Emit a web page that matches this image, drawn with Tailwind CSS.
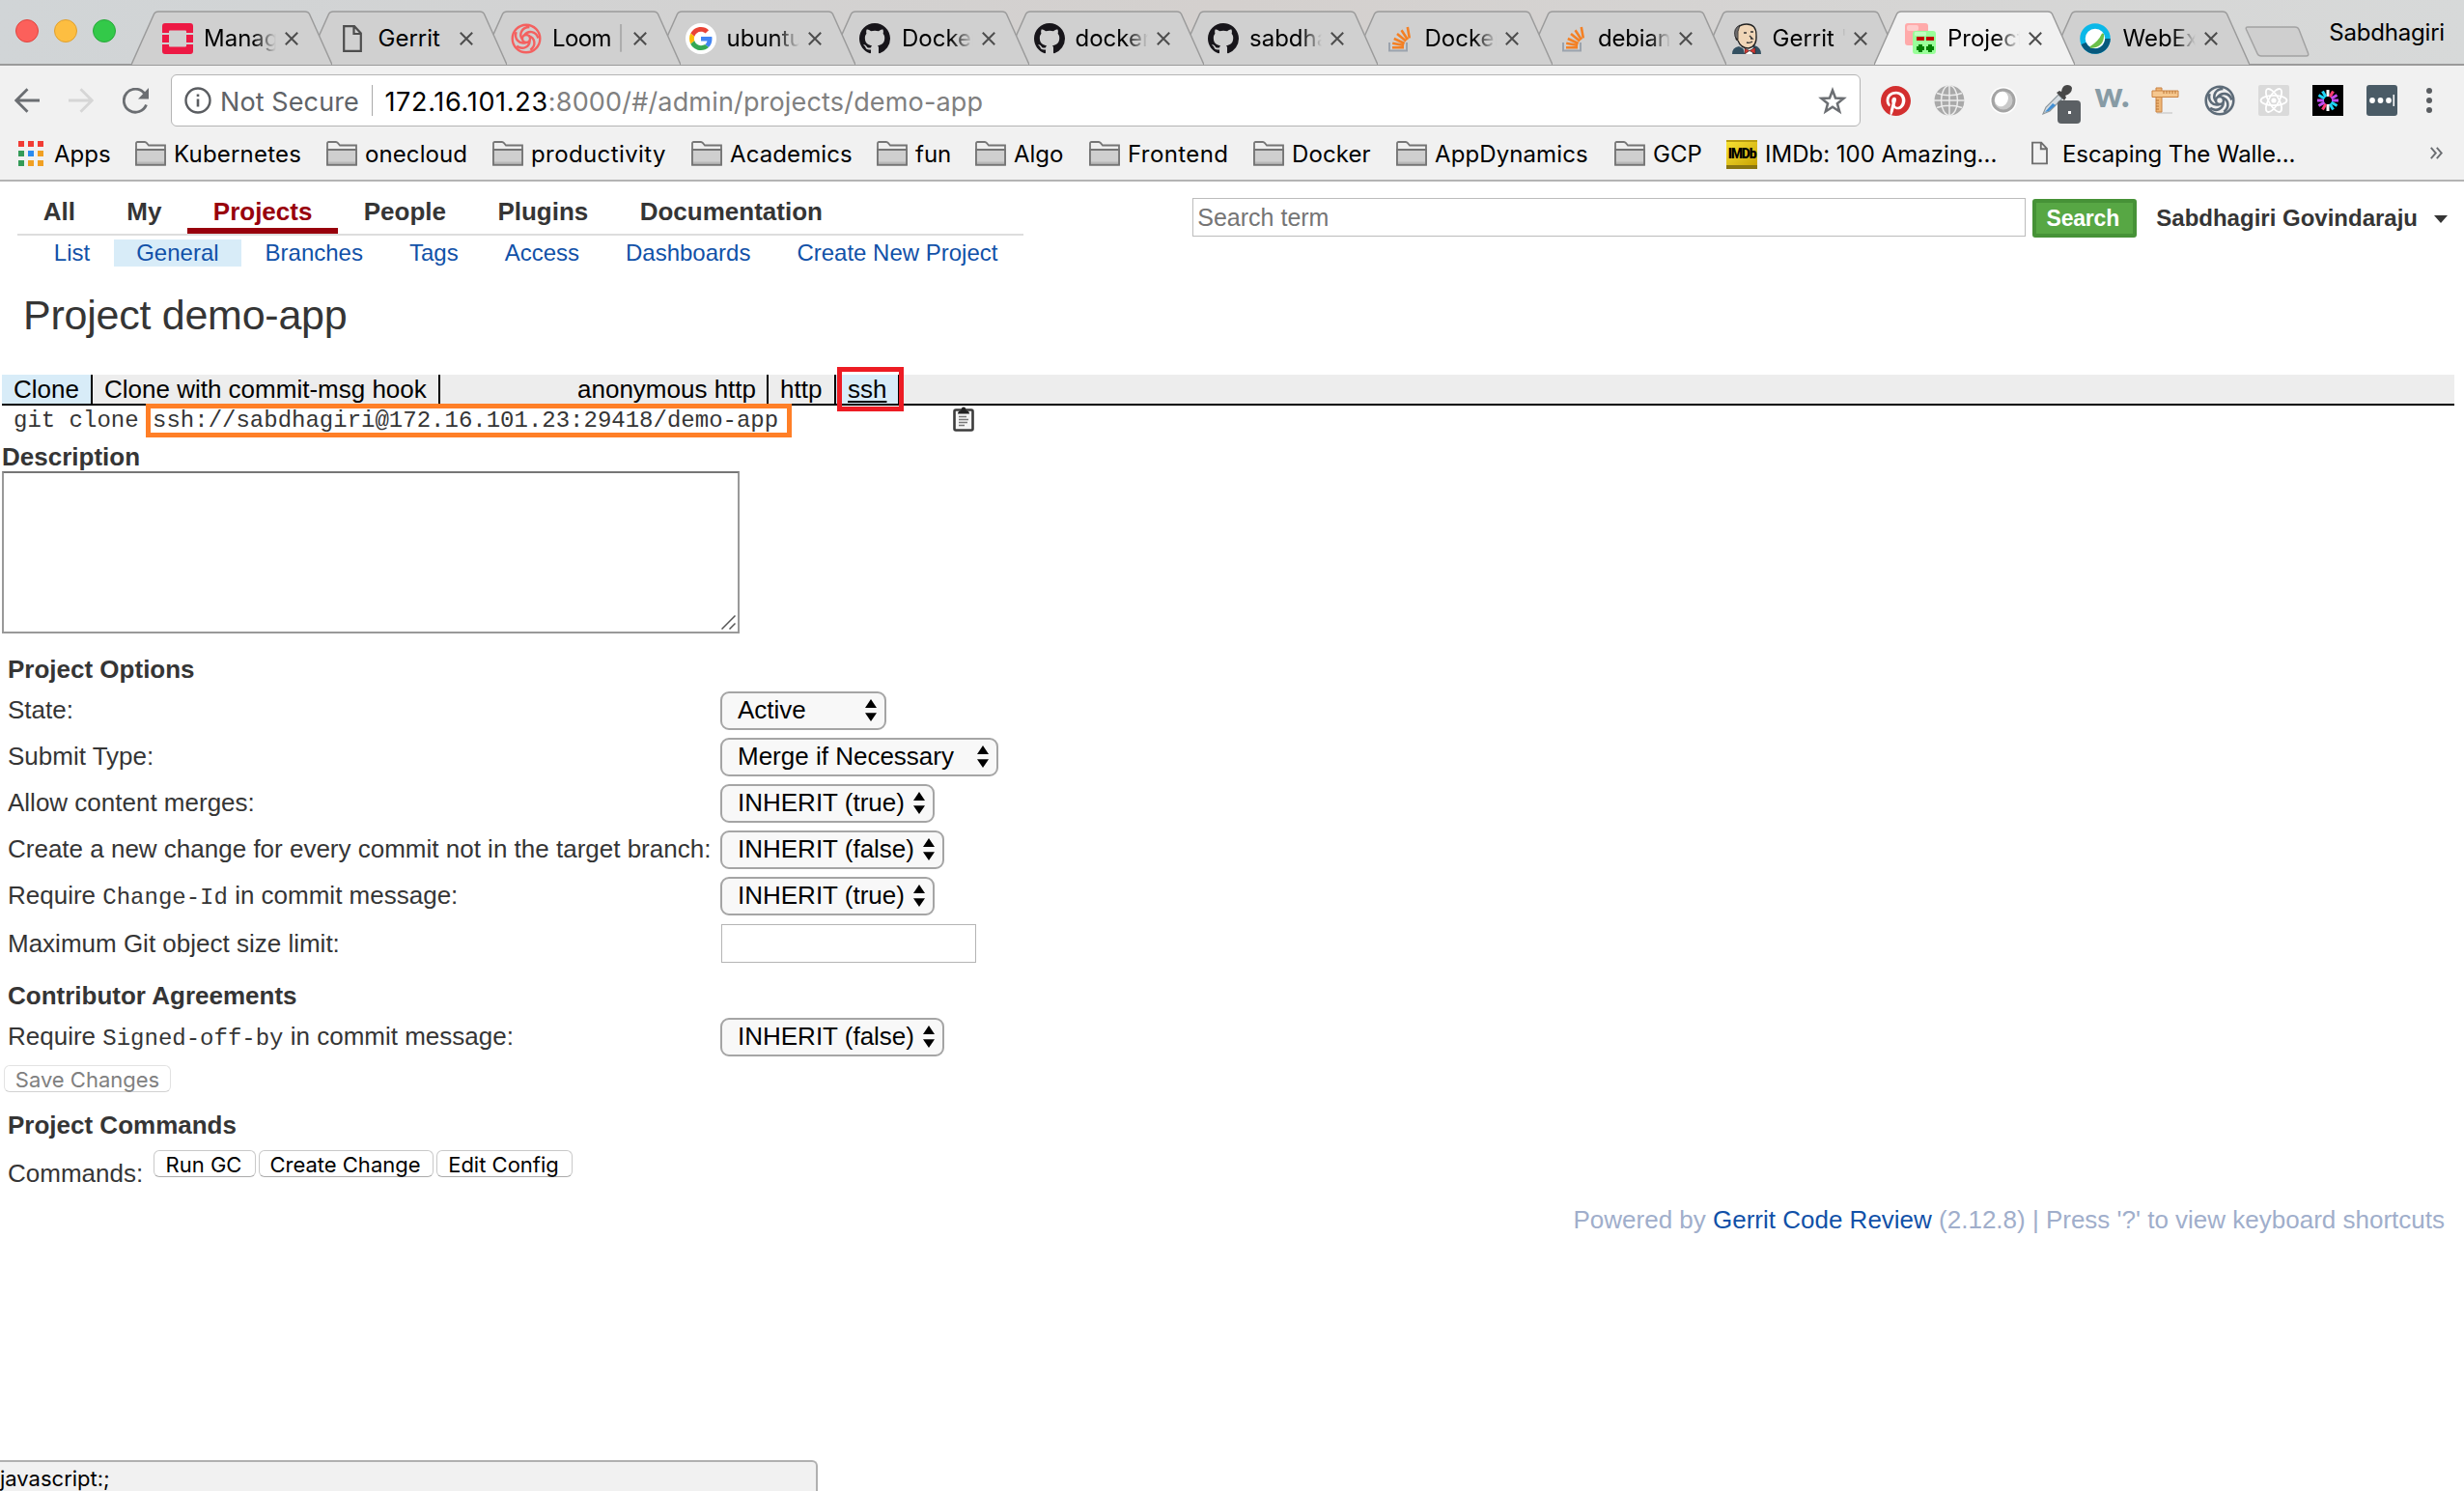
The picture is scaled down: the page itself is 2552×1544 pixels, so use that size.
<!DOCTYPE html>
<html lang="en">
<head>
<meta charset="utf-8">
<title>Project demo-app</title>
<script src="https://cdn.jsdelivr.net/npm/@tailwindcss/browser@4"></script>
</head>
<body class="bg-white w-[2552px] h-[1544px] overflow-hidden relative font-['Liberation_Sans',Arial,sans-serif] text-[26px] text-[#353535]">

<!-- shared symbols -->
<svg class="hidden">
  <symbol id="tab" viewBox="0 0 208 68"><path d="M0 67L23.500 14.500Q24.800 12 28 12H180Q183.200 12 184.500 14.500L208 67" stroke="#9b9b9b" stroke-width="1.500"/></symbol>
  <symbol id="x" viewBox="0 0 14 14"><path d="M.8.8l12.400 12.400M13.200.8L.8 13.200" stroke="#4d4d4d" stroke-width="2" fill="none"/></symbol>
  <symbol id="page" viewBox="0 0 20 28"><path d="M1.200 1.200H12L18.800 8.500V26.800H1.200ZM11.500 1.500V9H18.500" fill="none" stroke="currentColor" stroke-width="2.200"/></symbol>
  <symbol id="folder" viewBox="0 0 32 26"><path d="M1 24.500V2.500Q1 1 2.500 1H10Q11 1 12 2.200L14 4.500H31V24.500Z" fill="#efefef" stroke="#757575" stroke-width="1.800"/><path d="M1 9H31V24.500H1Z" fill="#cfcfcf" stroke="#757575" stroke-width="1.800"/><path d="M2 22.500H30" stroke="#b8b8b8" stroke-width="2"/></symbol>
  <symbol id="gh" viewBox="0 0 16 16"><path fill="#17151a" d="M8 0C3.580 0 0 3.580 0 8c0 3.540 2.290 6.530 5.470 7.590.4.07.55-.17.55-.38 0-.19-.01-.82-.01-1.490-2.010.37-2.530-.49-2.690-.94-.09-.23-.48-.94-.82-1.130-.28-.15-.68-.52-.01-.53.63-.01 1.080.58 1.230.82.72 1.210 1.870.87 2.330.66.07-.52.28-.87.51-1.070-1.780-.2-3.640-.89-3.640-3.950 0-.87.31-1.590.82-2.150-.08-.2-.36-1.020.08-2.120 0 0 .67-.21 2.200.82.64-.18 1.320-.27 2-.27s1.360.09 2 .27c1.530-1.040 2.200-.82 2.200-.82.44 1.100.16 1.920.08 2.120.51.56.82 1.270.82 2.150 0 3.070-1.870 3.750-3.650 3.950.29.25.54.73.54 1.480 0 1.070-.01 1.930-.01 2.200 0 .21.15.46.55.38A8.010 8.010 0 0 0 16 8c0-4.420-3.580-8-8-8z"/></symbol>
  <symbol id="so" viewBox="0 0 32 32"><path d="M7 20v8.500h18V20" fill="none" stroke="#9ba3ad" stroke-width="2"/><g stroke="#f48024" stroke-width="2.600"><path d="M10 25.300h12M10.200 20.800l11.900 2.200M11.800 16l10.900 5M15 11l9.200 7.600M19.500 7.300l6.400 9.700M25.800 4l2 11.500"/></g></symbol>
  <symbol id="knot" viewBox="0 0 32 32"><g fill="none" stroke="currentColor"><circle cx="16" cy="16" r="4"/><path d="M14 12.500C18 7 26 8 28.500 15.500"/><path d="M14 12.500C18 7 26 8 28.500 15.500" transform="rotate(72 16 16)"/><path d="M14 12.500C18 7 26 8 28.500 15.500" transform="rotate(144 16 16)"/><path d="M14 12.500C18 7 26 8 28.500 15.500" transform="rotate(216 16 16)"/><path d="M14 12.500C18 7 26 8 28.500 15.500" transform="rotate(288 16 16)"/><circle cx="16" cy="16" r="14.300"/></g></symbol>
  <symbol id="ud" viewBox="0 0 12 23"><path d="M6 0L12 9H0ZM6 23L12 14.200H0Z" fill="#000"/></symbol>
</svg>

<!-- browser tab strip -->
<div class="h-[68px] flex relative font-['Inter',sans-serif] text-[24px] text-black bg-linear-to-r from-[#d1d5d7] via-[#d4d0ce] to-[#d7d9d9] border-b-2 border-[#9a9a9a]">
  <div class="flex gap-4 pt-5 pl-4 w-[162px] shrink-0">
    <div class="size-6 rounded-full bg-[#fc605b] border border-[#e0443e]"></div>
    <div class="size-6 rounded-full bg-[#fdbe41] border border-[#e0a02e]"></div>
    <div class="size-6 rounded-full bg-[#33c949] border border-[#28a83a]"></div>
  </div>

  <div class="relative z-[12] w-[180.5px] shrink-0 h-[68px]">
    <svg class="absolute -left-[26px] top-0 w-[208px] h-[68px] fill-[#d0d0d0]"><use href="#tab"/></svg>
    <div class="relative flex items-center h-14 mt-3 pl-1.5">
      <svg class="size-8 shrink-0" viewBox="0 0 32 32" fill="#ed1944"><path d="M3 0H29Q32 0 32 3V10H25V8.500Q25 7.500 24 7.500H8Q7 7.500 7 8.500V10H0V3Q0 0 3 0ZM0 12H7V20H0ZM25 12H32V20H25ZM0 22H7V23.500Q7 24.500 8 24.500H24Q25 24.500 25 23.500V22H32V29Q32 32 29 32H3Q0 32 0 29Z"/></svg>
      <span class="ml-[11px] w-[75px] overflow-hidden whitespace-nowrap [mask-image:linear-gradient(to_right,black_68%,transparent)]">Manag</span>
      <svg class="ml-[9px] size-3.5 shrink-0"><use href="#x"/></svg>
    </div>
  </div>
  <div class="relative z-[11] w-[180.5px] shrink-0 h-[68px]">
    <svg class="absolute -left-[26px] top-0 w-[208px] h-[68px] fill-[#d0d0d0]"><use href="#tab"/></svg>
    <div class="relative flex items-center h-14 mt-3 pl-1.5">
      <div class="w-8 shrink-0 flex justify-center text-[#4d4d4d]"><svg class="w-5 h-7"><use href="#page"/></svg></div>
      <span class="ml-[11px] w-[75px] overflow-hidden whitespace-nowrap">Gerrit</span>
      <svg class="ml-[9px] size-3.5 shrink-0"><use href="#x"/></svg>
    </div>
  </div>
  <div class="relative z-[10] w-[180.5px] shrink-0 h-[68px]">
    <svg class="absolute -left-[26px] top-0 w-[208px] h-[68px] fill-[#d0d0d0]"><use href="#tab"/></svg>
    <div class="relative flex items-center h-14 mt-3 pl-1.5">
      <svg class="size-8 shrink-0 text-[#f4605f] stroke-[2.4px]"><use href="#knot"/></svg>
      <span class="ml-[11px] w-[75px] overflow-hidden whitespace-nowrap tracking-[-0.6px] [mask-image:linear-gradient(to_right,black_82%,transparent_98%)]">Loom |</span>
      <svg class="ml-[9px] size-3.5 shrink-0"><use href="#x"/></svg>
    </div>
  </div>
  <div class="relative z-[9] w-[180.5px] shrink-0 h-[68px]">
    <svg class="absolute -left-[26px] top-0 w-[208px] h-[68px] fill-[#d0d0d0]"><use href="#tab"/></svg>
    <div class="relative flex items-center h-14 mt-3 pl-1.5">
      <div class="size-8 shrink-0 rounded-full bg-white flex items-center justify-center"><svg class="size-6" viewBox="0 0 48 48"><path fill="#EA4335" d="M24 9.500c3.540 0 6.710 1.220 9.210 3.600l6.850-6.850C35.900 2.380 30.470 0 24 0 14.620 0 6.510 5.380 2.560 13.220l7.980 6.190C12.430 13.720 17.740 9.500 24 9.500z"/><path fill="#4285F4" d="M46.980 24.550c0-1.570-.15-3.090-.38-4.550H24v9.020h12.940c-.58 2.960-2.260 5.480-4.780 7.180l7.730 6c4.510-4.180 7.090-10.360 7.090-17.650z"/><path fill="#FBBC05" d="M10.530 28.590c-.48-1.450-.76-2.990-.76-4.590s.27-3.140.76-4.590l-7.980-6.190C.92 16.460 0 20.120 0 24c0 3.880.92 7.540 2.560 10.780l7.970-6.190z"/><path fill="#34A853" d="M24 48c6.480 0 11.930-2.130 15.890-5.810l-7.730-6c-2.150 1.450-4.920 2.300-8.160 2.300-6.260 0-11.570-4.220-13.470-9.910l-7.980 6.190C6.510 42.620 14.620 48 24 48z"/></svg></div>
      <span class="ml-[11px] w-[75px] overflow-hidden whitespace-nowrap [mask-image:linear-gradient(to_right,black_68%,transparent)]">ubuntu</span>
      <svg class="ml-[9px] size-3.5 shrink-0"><use href="#x"/></svg>
    </div>
  </div>
  <div class="relative z-[8] w-[180.5px] shrink-0 h-[68px]">
    <svg class="absolute -left-[26px] top-0 w-[208px] h-[68px] fill-[#d0d0d0]"><use href="#tab"/></svg>
    <div class="relative flex items-center h-14 mt-3 pl-1.5">
      <svg class="size-8 shrink-0"><use href="#gh"/></svg>
      <span class="ml-[12px] w-[74px] overflow-hidden whitespace-nowrap [mask-image:linear-gradient(to_right,black_68%,transparent)]">Docker</span>
      <svg class="ml-[9px] size-3.5 shrink-0"><use href="#x"/></svg>
    </div>
  </div>
  <div class="relative z-[7] w-[180.5px] shrink-0 h-[68px]">
    <svg class="absolute -left-[26px] top-0 w-[208px] h-[68px] fill-[#d0d0d0]"><use href="#tab"/></svg>
    <div class="relative flex items-center h-14 mt-3 pl-1.5">
      <svg class="size-8 shrink-0"><use href="#gh"/></svg>
      <span class="ml-[11px] w-[75px] overflow-hidden whitespace-nowrap [mask-image:linear-gradient(to_right,black_68%,transparent)]">docker</span>
      <svg class="ml-[9px] size-3.5 shrink-0"><use href="#x"/></svg>
    </div>
  </div>
  <div class="relative z-[6] w-[180.5px] shrink-0 h-[68px]">
    <svg class="absolute -left-[26px] top-0 w-[208px] h-[68px] fill-[#d0d0d0]"><use href="#tab"/></svg>
    <div class="relative flex items-center h-14 mt-3 pl-1.5">
      <svg class="size-8 shrink-0"><use href="#gh"/></svg>
      <span class="ml-[11px] w-[75px] overflow-hidden whitespace-nowrap [mask-image:linear-gradient(to_right,black_72%,transparent)]">sabdha</span>
      <svg class="ml-[9px] size-3.5 shrink-0"><use href="#x"/></svg>
    </div>
  </div>
  <div class="relative z-[5] w-[180.5px] shrink-0 h-[68px]">
    <svg class="absolute -left-[26px] top-0 w-[208px] h-[68px] fill-[#d0d0d0]"><use href="#tab"/></svg>
    <div class="relative flex items-center h-14 mt-3 pl-1.5">
      <svg class="size-8 shrink-0"><use href="#so"/></svg>
      <span class="ml-[12px] w-[74px] overflow-hidden whitespace-nowrap [mask-image:linear-gradient(to_right,black_68%,transparent)]">Docker</span>
      <svg class="ml-[9px] size-3.5 shrink-0"><use href="#x"/></svg>
    </div>
  </div>
  <div class="relative z-[4] w-[180.5px] shrink-0 h-[68px]">
    <svg class="absolute -left-[26px] top-0 w-[208px] h-[68px] fill-[#d0d0d0]"><use href="#tab"/></svg>
    <div class="relative flex items-center h-14 mt-3 pl-1.5">
      <svg class="size-8 shrink-0"><use href="#so"/></svg>
      <span class="ml-[11px] w-[75px] overflow-hidden whitespace-nowrap tracking-[-0.2px] [mask-image:linear-gradient(to_right,black_72%,transparent)]">debian</span>
      <svg class="ml-[9px] size-3.5 shrink-0"><use href="#x"/></svg>
    </div>
  </div>
  <div class="relative z-[3] w-[180.5px] shrink-0 h-[68px]">
    <svg class="absolute -left-[26px] top-0 w-[208px] h-[68px] fill-[#d0d0d0]"><use href="#tab"/></svg>
    <div class="relative flex items-center h-14 mt-3 pl-1.5">
      <svg class="size-8 shrink-0" viewBox="0 0 32 32"><path d="M1 32Q1 25 8 24L16 28L24 23Q31 25 31 32Z" fill="#335061"/><path d="M12 24L14 32H22L23 22Z" fill="#fff"/><path d="M5 12Q5 1 16 1Q26 1 26 12Q27 24 18 26Q10 26 7 18Q4 17 5 12Z" fill="#f0d6b7" stroke="#222" stroke-width="1.300"/><path d="M4 14Q2 5 9 2Q6 8 7 17Z" fill="#6d6b6d" stroke="#222" stroke-width=".8"/><path d="M13 10h3M20 9h3M19 13l3 3h-2M16 20q3 1 6-1" stroke="#333" stroke-width="1.400" fill="none"/><path d="M14 26L19 28.500L14 32ZM25 25L19 28.500L25 32Z" fill="#d33833" stroke="#222" stroke-width=".6"/></svg>
      <span class="ml-[11px] w-[75px] overflow-hidden whitespace-nowrap [mask-image:linear-gradient(to_right,black_84%,transparent_100%)]">Gerrit '</span>
      <svg class="ml-[9px] size-3.5 shrink-0"><use href="#x"/></svg>
    </div>
  </div>
  <div class="relative z-[20] w-[180.5px] shrink-0 h-[68px]">
    <svg class="absolute -left-[26px] top-0 w-[208px] h-[68px] fill-[#f1f1f1]"><use href="#tab"/></svg>
    <div class="relative flex items-center h-14 mt-3 pl-1.5">
      <svg class="size-8 shrink-0" viewBox="0 0 32 32"><rect x="0" y="0" width="24" height="23" rx="3" fill="#ffaaaa"/><rect x="2" y="2" width="12" height="6" rx="2" fill="#ffcccc"/><rect x="8" y="8" width="24" height="24" rx="3" fill="#99ff99"/><rect x="10" y="9" width="12" height="4" rx="1" fill="#bfffbf"/><path d="M12 14h8v4h-8zM22 14h8v4h-8z" fill="#c00000"/><path d="M14 22h4v2h2v4h-2v2h-4v-2h-2v-4h2zM24 22h4v2h2v4h-2v2h-4v-2h-2v-4h2z" fill="#008000"/></svg>
      <span class="ml-[12px] w-[75px] overflow-hidden whitespace-nowrap [mask-image:linear-gradient(to_right,black_68%,transparent)]">Project</span>
      <svg class="ml-[9px] size-3.5 shrink-0"><use href="#x"/></svg>
    </div>
  </div>
  <div class="relative z-[2] w-[180.5px] shrink-0 h-[68px]">
    <svg class="absolute -left-[26px] top-0 w-[208px] h-[68px] fill-[#d0d0d0]"><use href="#tab"/></svg>
    <div class="relative flex items-center h-14 mt-3 pl-1.5">
      <svg class="size-8 shrink-0" viewBox="0 0 32 32"><circle cx="16" cy="16" r="13" fill="#fff" stroke="#0bb8e8" stroke-width="5.500"/><path d="M29 16A13 13 0 0 1 4 21" fill="none" stroke="#07597d" stroke-width="5.500"/><path d="M24 11Q25 24 11 25Q20 20 24 11Z" fill="#6cc04a" stroke="#6cc04a" stroke-width="2"/></svg>
      <span class="ml-[13px] w-[75px] overflow-hidden whitespace-nowrap [mask-image:linear-gradient(to_right,black_68%,transparent)]">WebEx</span>
      <svg class="ml-[9px] size-3.5 shrink-0"><use href="#x"/></svg>
    </div>
  </div>
  <svg class="w-[67px] h-[33px] mt-[27px] -ml-[3px] shrink-0" viewBox="0 0 67 33"><path d="M3 1H52Q55 1 56 3.500L65.500 28Q66.500 31 63.500 31H17Q14 31 13 28.500L1.500 3.500Q.5 1 3 1Z" fill="#cfcfcf" stroke="#a3a3a3" stroke-width="1.500"/></svg>
  <span class="ml-auto mr-5 mt-[18px] leading-8 tracking-[-0.2px]">Sabdhagiri</span>
</div>

<!-- toolbar and bookmarks -->
<div class="h-[120px] bg-[#f1f1f1] border-b-2 border-[#b4b4b4] pt-[9px] font-['Inter',sans-serif] text-black">
  <div class="flex h-[54px] items-center">
    <svg class="ml-[15px] w-[26px] h-[26px]" viewBox="0 0 26 26"><path d="M26 13H2M13.500 1.200L1.800 13L13.500 24.800" fill="none" stroke="#6b6e72" stroke-width="2.800"/></svg>
    <svg class="ml-[30px] w-[26px] h-[26px]" viewBox="0 0 26 26"><path d="M0 13H24M12.500 1.200L24.200 13L12.500 24.800" fill="none" stroke="#d6d6d6" stroke-width="2.800"/></svg>
    <svg class="ml-[30px] w-7 h-[27px]" viewBox="0 0 28 27"><path d="M24.500 17.500A12 12 0 1 1 22.500 5.500" fill="none" stroke="#6b6e72" stroke-width="2.800"/><path d="M27 0V11.500H16Z" fill="#6b6e72"/></svg>
    <div class="ml-[22px] w-[1750px] h-[54px] bg-white border-[1.5px] border-[#b4b4b4] rounded-md flex items-center text-[27px] leading-8">
      <svg class="ml-[13px] size-7" viewBox="0 0 28 28"><circle cx="14" cy="14" r="12.500" fill="none" stroke="#5a5d61" stroke-width="2.400"/><path d="M14 12.500V20.500M14 7.500V10" stroke="#5a5d61" stroke-width="2.600"/></svg>
      <span class="ml-[9px] text-[#5f6368] mt-[3px] tracking-[0.1px]">Not Secure</span>
      <div class="ml-[13px] w-[1.5px] h-8 bg-[#a9a9a9]"></div>
      <span class="ml-[12px] mt-[3px] tracking-[0.7px]">172.16.101.23</span><span class="mt-[3px] text-[#808080] tracking-[0.17px]">:8000/#/admin/projects/demo-app</span>
      <svg class="ml-auto mr-[13px] w-[30px] h-[29px]" viewBox="0 0 30 29"><path d="M15 3.500L18 11.500L26.500 11.900L19.900 17.200L22.200 25.500L15 20.800L7.800 25.500L10.100 17.200L3.500 11.900L12 11.500Z" fill="none" stroke="#6b6e72" stroke-width="2.500"/></svg>
    </div>
    <!-- extension buttons -->
    <div class="flex ml-[8px] items-center *:w-14 *:h-[54px] *:flex *:items-center *:justify-center">
      <div><svg class="w-[31px] h-[31px]" viewBox="0 0 24 24"><circle cx="12" cy="12" r="11" fill="#fff"/><path fill="#d32f2f" d="M12 0C5.373 0 0 5.372 0 12c0 5.084 3.163 9.426 7.627 11.174-.105-.949-.2-2.405.042-3.441.218-.937 1.407-5.965 1.407-5.965s-.359-.719-.359-1.782c0-1.668.967-2.914 2.171-2.914 1.023 0 1.518.769 1.518 1.690 0 1.029-.655 2.568-.994 3.995-.283 1.194.599 2.169 1.777 2.169 2.133 0 3.772-2.249 3.772-5.495 0-2.873-2.064-4.882-5.012-4.882-3.414 0-5.418 2.561-5.418 5.207 0 1.031.397 2.138.893 2.738.098.119.112.224.083.345l-.333 1.360c-.053.22-.174.267-.402.161-1.499-.698-2.436-2.889-2.436-4.649 0-3.785 2.750-7.262 7.929-7.262 4.163 0 7.398 2.967 7.398 6.931 0 4.136-2.607 7.464-6.227 7.464-1.216 0-2.359-.631-2.750-1.378l-.748 2.853c-.271 1.043-1.002 2.350-1.492 3.146C9.570 23.812 10.763 24 12 24c6.627 0 12-5.373 12-12 0-6.628-5.373-12-12-12z"/></svg></div>
      <div><svg class="size-8" viewBox="0 0 32 32"><circle cx="16" cy="16" r="15.500" fill="#a9a9a9"/><g fill="none" stroke="#ececec" stroke-width="1.500"><path d="M16 0V32M0 16H32M3 8.500Q16 13 29 8.500M3 23.500Q16 19 29 23.500"/><ellipse cx="16" cy="16" rx="8.500" ry="15.500"/></g></svg></div>
      <div><svg class="size-[30px]" viewBox="0 0 30 30"><circle cx="15" cy="15" r="14" fill="#fff"/><circle cx="15" cy="15" r="12.500" fill="#a4a4a4"/><circle cx="15" cy="15" r="9.500" fill="#c9c9c9"/><ellipse cx="13" cy="13.500" rx="6.800" ry="8" fill="#fff" transform="rotate(25 13 13.500)"/></svg></div>
      <div class="relative"><svg class="size-8" viewBox="0 0 32 32"><path d="M1 30L4 23L17 10L21 14L8 27Z" fill="#d6dde2" stroke="#8c969c" stroke-width="1.200"/><path d="M3 28L11 19L14 21L7 27Z" fill="#3f8fd6"/><path d="M15 8L23 16L25 13L24 11Q31 9 31 3Q30 0 26 0Q21 0 20 7L18 6Z" fill="#474747"/></svg><div class="absolute left-[28px] top-[27px] w-6 h-6 rounded bg-[#5b6064] flex items-center justify-center"><div class="size-[3px] bg-white"></div></div></div>
      <div><span class="text-[36px] leading-7 font-black text-[#879ba5] -mt-[14px] tracking-[-1px] font-['Lato',sans-serif]">w.</span></div>
      <div><svg class="w-[30px] h-[28px]" viewBox="0 0 30 28"><path d="M6 27h16" stroke="#d8d8d8" stroke-width="2"/><path d="M5 1H11V26H5Z" fill="#f0b777" stroke="#c98242"/><path d="M1 4H28V10.500H1Z" fill="#f6c78e" stroke="#c98242"/><path d="M13 4v3M16 4v3M19 4v3M22 4v3M25 4v3M5 14h3M5 17h3M5 20h3M5 23h3" stroke="#b87333"/></svg></div>
      <div><svg class="size-8 text-[#5d6b78] stroke-[2.6px]"><use href="#knot"/></svg></div>
      <div><svg class="size-8" viewBox="0 0 32 32"><rect width="32" height="32" rx="2" fill="#dadada"/><g fill="none" stroke="#fff" stroke-width="1.800"><ellipse cx="16" cy="16" rx="13.500" ry="5.200"/><ellipse cx="16" cy="16" rx="13.500" ry="5.200" transform="rotate(60 16 16)"/><ellipse cx="16" cy="16" rx="13.500" ry="5.200" transform="rotate(120 16 16)"/></g><circle cx="16" cy="16" r="2.600" fill="#fff"/></svg></div>
      <div><svg class="size-8" viewBox="0 0 32 32"><path d="M0 0H32V32H0Z" fill="#000"/><g stroke-width="3"><path d="M16 5v7" stroke="#fff"/><path d="M16 5v7" stroke="#ff3d71" transform="rotate(30 16 16)"/><path d="M16 5v7" stroke="#c44df0" transform="rotate(60 16 16)"/><path d="M16 5v7" stroke="#c44df0" transform="rotate(90 16 16)"/><path d="M16 5v7" stroke="#1fd5f5" transform="rotate(120 16 16)"/><path d="M16 5v7" stroke="#1fd5f5" transform="rotate(150 16 16)"/><path d="M16 5v7" stroke="#fff" transform="rotate(180 16 16)"/><path d="M16 5v7" stroke="#ff3d71" transform="rotate(210 16 16)"/><path d="M16 5v7" stroke="#c44df0" transform="rotate(240 16 16)"/><path d="M16 5v7" stroke="#c44df0" transform="rotate(270 16 16)"/><path d="M16 5v7" stroke="#1fd5f5" transform="rotate(300 16 16)"/><path d="M16 5v7" stroke="#1fd5f5" transform="rotate(330 16 16)"/></g></svg></div>
      <div><svg class="size-8" viewBox="0 0 32 32"><rect width="32" height="32" rx="3" fill="#4a5b66"/><g fill="#fff"><circle cx="6" cy="16" r="2.900"/><circle cx="14.500" cy="16" r="2.900"/><circle cx="23" cy="16" r="2.900"/><path d="M27.500 10h1.500v12h-1.500z"/></g></svg></div>
    </div>
    <svg class="ml-[18px] w-[6px] h-[26px]" viewBox="0 0 6 26" fill="#5a5d61"><circle cx="3" cy="3" r="3"/><circle cx="3" cy="13" r="3"/><circle cx="3" cy="23" r="3"/></svg>
  </div>

  <div class="flex h-[55px] items-center text-[24px] leading-7 pl-[19px] whitespace-nowrap">
    <div class="flex items-center w-[121px] shrink-0"><svg class="w-[26px] h-[26px]" viewBox="0 0 26 26"><path d="M0 0h6v6H0zM10 0h6v6h-6zM20 0h6v6h-6z" fill="#f13c35"/><path d="M0 10h6v6H0zM0 20h6v6H0z" fill="#349b58"/><path d="M10 10h6v6h-6z" fill="#2a8bf0"/><path d="M20 10h6v6h-6zM10 20h6v6h-6zM20 20h6v6h-6z" fill="#f0a023"/></svg><span class="ml-[11px] mt-[3px]">Apps</span></div>
    <div class="flex items-center w-[198px] shrink-0"><svg class="w-8 h-[26px]"><use href="#folder"/></svg><span class="ml-[8px] mt-[3px] tracking-[0.2px]">Kubernetes</span></div>
    <div class="flex items-center w-[172px] shrink-0"><svg class="w-8 h-[26px]"><use href="#folder"/></svg><span class="ml-[8px] mt-[3px] tracking-[0.1px]">onecloud</span></div>
    <div class="flex items-center w-[206px] shrink-0"><svg class="w-8 h-[26px]"><use href="#folder"/></svg><span class="ml-[8px] mt-[3px] tracking-[0.4px]">productivity</span></div>
    <div class="flex items-center w-[192px] shrink-0"><svg class="w-8 h-[26px]"><use href="#folder"/></svg><span class="ml-[8px] mt-[3px] tracking-[0.1px]">Academics</span></div>
    <div class="flex items-center w-[102px] shrink-0"><svg class="w-8 h-[26px]"><use href="#folder"/></svg><span class="ml-[8px] mt-[3px]">fun</span></div>
    <div class="flex items-center w-[118px] shrink-0"><svg class="w-8 h-[26px]"><use href="#folder"/></svg><span class="ml-[8px] mt-[3px]">Algo</span></div>
    <div class="flex items-center w-[170px] shrink-0"><svg class="w-8 h-[26px]"><use href="#folder"/></svg><span class="ml-[8px] mt-[3px] tracking-[0.4px]">Frontend</span></div>
    <div class="flex items-center w-[148px] shrink-0"><svg class="w-8 h-[26px]"><use href="#folder"/></svg><span class="ml-[8px] mt-[3px] tracking-[0.1px]">Docker</span></div>
    <div class="flex items-center w-[226px] shrink-0"><svg class="w-8 h-[26px]"><use href="#folder"/></svg><span class="ml-[8px] mt-[3px] tracking-[0.1px]">AppDynamics</span></div>
    <div class="flex items-center w-[116px] shrink-0"><svg class="w-8 h-[26px]"><use href="#folder"/></svg><span class="ml-[8px] mt-[3px]">GCP</span></div>
    <div class="flex items-center w-[316px] shrink-0"><div class="w-8 h-[30px] mt-0.5 bg-linear-to-br from-[#f8e231] to-[#c9a400] border-t-2 border-b-4 border-t-[#b99d10] border-b-[#8a7510] flex items-center justify-center font-['Roboto',sans-serif] font-black text-[14px] tracking-[-1.2px] leading-none">IMDb</div><span class="ml-[8px] mt-[3px]">IMDb: 100 Amazing...</span></div>
    <div class="flex items-center shrink-0 text-[#6e6e6e]"><svg class="w-[17px] h-[25px]"><use href="#page"/></svg><span class="ml-[15px] mt-[3px] text-black tracking-[-0.1px]">Escaping The Walle...</span></div>
    <svg class="ml-auto mr-[22px] w-[13px] h-[13px]" viewBox="0 0 13 13"><path d="M.8.8L5.800 6.500L.8 12.200M6.800.8L11.800 6.500L6.800 12.200" fill="none" stroke="#6b6e72" stroke-width="1.900"/></svg>
  </div>
</div>

<!-- page header -->
<header class="flex h-[88px]">
  <div class="ml-[18px] w-[1042px] shrink-0">
    <nav class="flex h-14 border-b-2 border-[#dddddd] font-bold whitespace-nowrap *:px-[26.7px] *:h-[54px] *:leading-[62px]">
      <a>All</a><a>My</a><a class="border-b-[6px] border-[#98000c] text-[#98000c]">Projects</a><a>People</a><a>Plugins</a><a>Documentation</a>
    </nav>
    <nav class="flex mt-1 ml-[14.5px] gap-[1.3px] text-[24px] text-[#1151a8] whitespace-nowrap *:px-[23.35px] *:h-7 *:leading-[28px]">
      <a>List</a><a class="bg-[#d8ecf8]">General</a><a>Branches</a><a>Tags</a><a>Access</a><a>Dashboards</a><a>Create New Project</a>
    </nav>
  </div>
  <div class="flex ml-auto mr-[17px] mt-[17px] h-10 items-center font-bold text-[24px]">
    <div class="w-[863px] h-10 border-[1.5px] border-[#bcbcbc] pl-[4px] font-normal text-[25px] leading-[39px] text-[#757575]">Search term</div>
    <div class="ml-[7px] mt-0.5 w-[108px] h-10 rounded-[3px] border-4 border-[#469237] bg-[#57a744] text-white text-[23px] tracking-[-0.2px] leading-[33px] text-center pr-1">Search</div>
    <span class="ml-[20px] mt-[2px]">Sabdhagiri Govindaraju</span>
    <svg class="ml-[17px] mt-1 w-[14px] h-[8px]" viewBox="0 0 14 8"><path d="M0 0H14L7 8Z" fill="#353535"/></svg>
  </div>
</header>

<h1 class="h-28 pt-6 pl-6 text-[43px] leading-[52px] tracking-[-0.25px]">Project demo-app</h1>

<!-- download commands -->
<div class="ml-0.5 w-[2540px] h-8 flex bg-[#ededed] border-b-2 border-black text-black leading-[30px] whitespace-nowrap">
  <div class="w-[94px] pl-[12px] bg-[#d8ecf8] border-r-2 border-black">Clone</div>
  <div class="w-[360px] pl-[12px] border-r-2 border-black">Clone with commit-msg hook</div>
  <div class="ml-[130px] w-[210px] pl-[12px] border-r-2 border-black">anonymous http</div>
  <div class="w-[70px] pl-[12px] border-r-2 border-black">http</div>
  <div class="w-[66px] pl-[12px] border-r-2 border-black bg-[#d8ecf8] relative"><span class="underline decoration-2 underline-offset-[3px]">ssh</span>
    <div class="absolute left-[1px] -top-2 w-[69px] h-[46px] border-5 border-[#ed1c24]"></div>
  </div>
</div>
<div class="flex h-9 pl-[14px] relative font-['Liberation_Mono',monospace] text-[24px] leading-8 whitespace-pre">
  <span>git clone </span><span class="relative">ssh://sabdhagiri@172.16.101.23:29418/demo-app<span class="absolute -left-[7px] -top-0.5 w-[669px] h-[35px] border-5 border-[#ff7f27]"></span></span>
  <svg class="ml-[181px] mt-px w-[22px] h-[26px]" viewBox="0 0 22 26"><rect x="1.500" y="3.500" width="19" height="21" rx="1.500" fill="#f4f4f4" stroke="#3c3c3c" stroke-width="2.600"/><path d="M5 7.500Q5 4.500 8.500 4Q8.500.5 11 .5T13.500 4Q17 4.500 17 7.500Z" fill="#222"/><path d="M6 10.500h8M6 13.500h10M6 16.500h9M6 19.500h6" stroke="#777" stroke-width="1.400"/></svg>
</div>

<div class="pl-0.5 h-8 leading-[34px] font-bold">Description</div>
<div class="ml-0.5 w-[764px] h-[168px] border-2 border-t-[#767676] border-x-[#999] border-b-[#999] flex items-end justify-end">
  <svg class="mr-0.5 mb-0.5 size-[15px]" viewBox="0 0 15 15"><path d="M.5 14.500L14.500.5M8.500 14.500L14.500 8.500" stroke="#555" stroke-width="1.500"/></svg>
</div>

<!-- project options -->
<section class="pl-2 whitespace-nowrap text-black *:h-12 *:flex">
  <h2 class="mt-2 font-bold text-[#353535] leading-[58px]">Project Options</h2>
  <div><span class="w-[738px] leading-[46px] text-[#353535]">State:</span><div class="my-1 w-[172px] h-10 border-2 border-[#a5a5a5] rounded-[9px] bg-[#f8f8f8] pl-4 pr-[8px] flex items-center justify-between"><span class="-mt-[2px]">Active</span><svg class="w-3 h-[23px] -mt-px"><use href="#ud"/></svg></div></div>
  <div><span class="w-[738px] leading-[46px] text-[#353535]">Submit Type:</span><div class="my-1 w-[288px] h-10 border-2 border-[#a5a5a5] rounded-[9px] bg-[#f8f8f8] pl-4 pr-[8px] flex items-center justify-between"><span class="-mt-[2px]">Merge if Necessary</span><svg class="w-3 h-[23px] -mt-px"><use href="#ud"/></svg></div></div>
  <div><span class="w-[738px] leading-[46px] text-[#353535]">Allow content merges:</span><div class="my-1 w-[222px] h-10 border-2 border-[#a5a5a5] rounded-[9px] bg-[#f8f8f8] pl-4 pr-[8px] flex items-center justify-between"><span class="-mt-[2px]">INHERIT (true)</span><svg class="w-3 h-[23px] -mt-px"><use href="#ud"/></svg></div></div>
  <div><span class="w-[738px] leading-[46px] text-[#353535]">Create a new change for every commit not in the target branch:</span><div class="my-1 w-[232px] h-10 border-2 border-[#a5a5a5] rounded-[9px] bg-[#f8f8f8] pl-4 pr-[8px] flex items-center justify-between"><span class="-mt-[2px]">INHERIT (false)</span><svg class="w-3 h-[23px] -mt-px"><use href="#ud"/></svg></div></div>
  <div><span class="w-[738px] leading-[46px] text-[#353535]">Require <span class="font-['Liberation_Mono',monospace] text-[24px]">Change-Id</span> in commit message:</span><div class="my-1 w-[222px] h-10 border-2 border-[#a5a5a5] rounded-[9px] bg-[#f8f8f8] pl-4 pr-[8px] flex items-center justify-between"><span class="-mt-[2px]">INHERIT (true)</span><svg class="w-3 h-[23px] -mt-px"><use href="#ud"/></svg></div></div>
  <div><span class="w-[739px] leading-[50px] text-[#353535]">Maximum Git object size limit:</span><div class="mt-[5px] w-[264px] h-10 border border-[#b5b5b5]"></div></div>
  <h2 class="font-bold text-[#353535] leading-[62px]">Contributor Agreements</h2>
  <div class="mt-0.5"><span class="w-[738px] leading-[46px] text-[#353535]">Require <span class="font-['Liberation_Mono',monospace] text-[24px]">Signed-off-by</span> in commit message:</span><div class="my-1 w-[232px] h-10 border-2 border-[#a5a5a5] rounded-[9px] bg-[#f8f8f8] pl-4 pr-[8px] flex items-center justify-between"><span class="-mt-[2px]">INHERIT (false)</span><svg class="w-3 h-[23px] -mt-px"><use href="#ud"/></svg></div></div>
</section>

<div class="mt-[5px] ml-[4px] w-[173px] h-7 rounded-md border border-[#e2e2e2] border-b-[#d2d2d2] text-center font-['Inter',sans-serif] text-[22px] leading-[28px] text-[#808080]">Save Changes</div>
<h2 class="mt-[9px] pl-2 font-bold leading-[50px]">Project Commands</h2>
<div class="flex h-[38px] pl-2 mt-px gap-[3px]">
  <span class="w-[148px] leading-[48px]">Commands:</span>
  <div class="flex gap-[3px] font-['Inter',sans-serif] text-[22px] leading-[28px] text-black text-center *:h-7 *:rounded-md *:border *:border-[#c9c9c9] *:border-b-[#ababab] *:pr-0.5">
    <div class="w-[106px]">Run GC</div>
    <div class="w-[181px]">Create Change</div>
    <div class="w-[141px]">Edit Config</div>
  </div>
</div>

<footer class="mt-[18px] pr-5 text-right leading-[32px] text-[#a0aecb]">Powered by <a class="text-[#1151a8]">Gerrit Code Review</a> (2.12.8) | Press '?' to view keyboard shortcuts</footer>

<!-- link status bubble -->
<div class="absolute left-0 bottom-0 w-[847px] h-8 bg-[#f1f1f1] border-t-2 border-r-2 border-[#b0b0b0] rounded-tr-md font-['Inter',sans-serif] text-[22px] leading-[34px] text-black">javascript:;</div>
</body>
</html>
